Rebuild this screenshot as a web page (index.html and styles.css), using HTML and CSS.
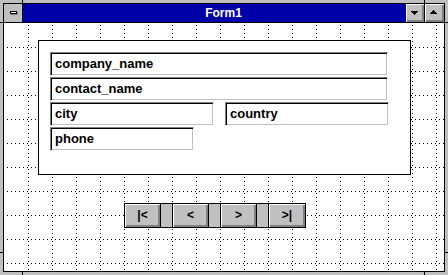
FILE: index.html
```html
<!DOCTYPE html>
<html>
<head>
<meta charset="utf-8">
<title>Form1</title>
<link rel="stylesheet" href="styles.css">
</head>
<body>
<div class="win">
  <div class="inner">
    <div class="titlebar">
      <div class="sysmenu"><div class="dash"></div></div>
      <div class="caption">Form1</div>
      <div class="capbtn min"><svg width="7" height="4" viewBox="0 0 7 4" shape-rendering="crispEdges"><path d="M0 0h7v1h-1v1h-1v1h-1v1h-1v-1h-1v-1h-1v-1h-1z"/></svg></div>
      <div class="capbtn max"><svg width="7" height="4" viewBox="0 0 7 4" shape-rendering="crispEdges"><path d="M3 0h1v1h1v1h1v1h1v1h-7v-1h1v-1h1v-1h1z"/></svg></div>
    </div>
    <div class="client">
      <div class="grid">
        <div class="frame">
          <div class="field w-full">company_name</div>
          <div class="field w-full">contact_name</div>
          <div class="row">
            <div class="field w-half">city</div>
            <div class="field w-half">country</div>
          </div>
          <div class="field w-phone">phone</div>
        </div>
        <div class="nav">
          <div class="nbtn">|&lt;</div>
          <div class="ngap"></div>
          <div class="nbtn">&lt;</div>
          <div class="ngap"></div>
          <div class="nbtn">&gt;</div>
          <div class="ngap"></div>
          <div class="nbtn">&gt;|</div>
        </div>
      </div>
    </div>
  </div>
</div>
</body>
</html>
```
FILE: styles.css
```css
html, body {
  margin: 0;
  padding: 0;
}
body {
  width: 448px;
  height: 275px;
  overflow: hidden;
  font-family: "Liberation Sans", Arial, sans-serif;
  color: #000;
}
.win {
  box-sizing: border-box;
  width: 448px;
  height: 275px;
  padding: 3px;
  background-color: #c0c0c0;
  background-image:
    linear-gradient(to right, transparent 22px, #000 22px, #000 23px, transparent 23px),
    linear-gradient(to right, transparent 424px, #000 424px, #000 425px, transparent 425px),
    linear-gradient(to bottom, transparent 22px, #000 22px, #000 23px, transparent 23px),
    linear-gradient(to bottom, transparent 252px, #000 252px, #000 253px, transparent 253px);
}
.inner {
  box-sizing: border-box;
  height: 269px;
  border: 1px solid #000;
  display: flex;
  flex-direction: column;
}
.titlebar {
  display: flex;
  height: 19px;
  box-sizing: border-box;
  border-bottom: 1px solid #000;
  flex: none;
}
.sysmenu {
  width: 19px;
  box-sizing: border-box;
  border-right: 1px solid #000;
  background: #c0c0c0;
  padding-top: 7px;
}
.dash {
  width: 7px;
  height: 3px;
  box-sizing: border-box;
  border: 1px solid #000;
  background: #fff;
  margin-left: 6px;
  box-shadow: 1px 1px 0 #808080;
}
.caption {
  flex: 1;
  background: #0000a8;
  color: #fff;
  font-weight: bold;
  font-size: 12px;
  line-height: 18px;
  text-align: center;
  padding-left: 18px;
}
.capbtn {
  background: #c0c0c0;
  box-shadow: inset 1px 1px #fff, inset -2px -2px #808080;
  box-sizing: border-box;
  width: 19px;
}
.capbtn svg {
  display: block;
  margin-left: 5px;
}
.min {
  border-right: 1px solid #000;
}
.min svg {
  margin-top: 7px;
}
.max svg {
  margin-top: 6px;
}
.client {
  box-sizing: border-box;
  height: 248px;
  background: #fff;
  padding: 1px 0 0 1px;
}
.grid {
  height: 100%;
  display: flow-root;
  background-image:
    conic-gradient(at 1px 1px, transparent 75%, #000 0),
    conic-gradient(at 1px 1px, transparent 75%, #000 0);
  background-size: 24px 4px, 4px 24px;
  background-position: 23px 1px, 2px 23px;
}
.frame {
  box-sizing: border-box;
  width: 373px;
  height: 135px;
  margin: 16px 0 0 33px;
  border: 1px solid #000;
  background: #fff;
  padding: 11px 0 0 11px;
  display: flex;
  flex-direction: column;
  gap: 1px;
}
.row {
  display: flex;
  gap: 11px;
}
.field {
  box-sizing: border-box;
  height: 24px;
  border: 1px solid;
  border-color: #808080 #fff #fff #808080;
  box-shadow: inset 1px 1px #000, inset -1px -1px #c0c0c0;
  font-weight: bold;
  font-size: 13px;
  line-height: 22px;
  padding-left: 4px;
  white-space: nowrap;
}
.w-full { width: 338px; }
.w-half { width: 164px; }
.w-phone { width: 144px; }
.nav {
  display: flex;
  width: max-content;
  height: 25px;
  box-sizing: border-box;
  border: 1px solid #000;
  margin: 28px 0 0 119px;
  background: #c0c0c0;
}
.nbtn {
  width: 35px;
  box-shadow: inset 1px 1px #fff, inset -2px -2px #808080;
  font-weight: bold;
  font-size: 12px;
  line-height: 23px;
  text-align: center;
}
.nbtn:last-child {
  width: 36px;
}
.ngap {
  width: 11px;
  border-left: 1px solid #000;
  border-right: 1px solid #000;
}
```
